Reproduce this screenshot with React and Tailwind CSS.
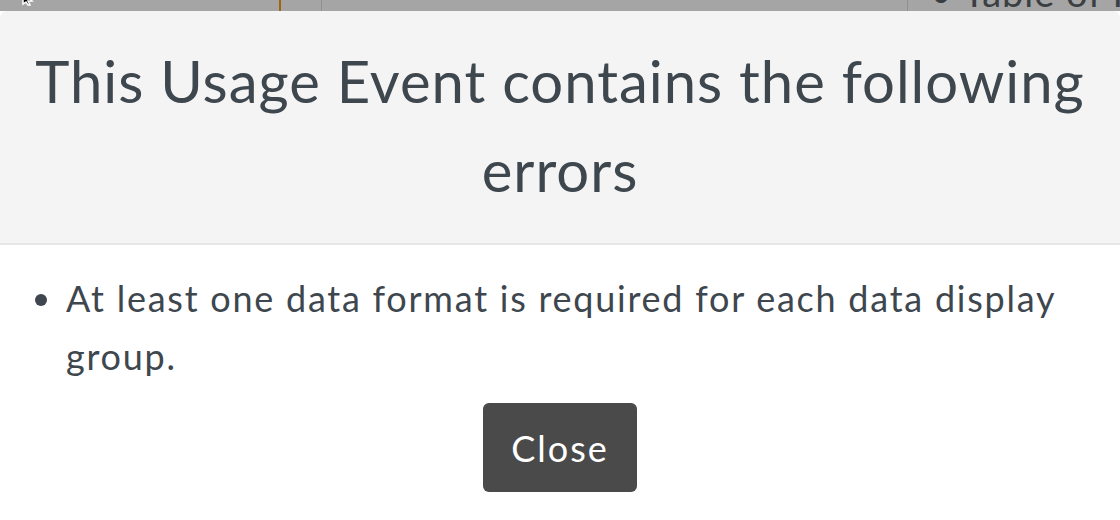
export default function App() {
  const font = { fontFamily: "Lato, 'Open Sans', sans-serif" };
  return (
    <div className="w-[1120px] h-[520px] overflow-hidden bg-white" style={font}>
      <div className="h-[11px] bg-[#a5a5a5] overflow-hidden flex items-end">
        <div className="w-[279px] h-full relative">
          <svg className="absolute left-[20px] top-[-8px]" width="18" height="14" viewBox="0 0 18 14">
            <path d="M3 0 L12 9 L8 9 L10 13 L8 13 L6 10 L3 12 Z" fill="#000" stroke="#fff" strokeWidth="1.5" />
          </svg>
        </div>
        <div className="w-[2px] h-full bg-[#a2630f]" />
        <div className="w-[40px] h-full" />
        <div className="w-[1px] h-full bg-[#8f8f8f]" />
        <div className="w-[585px] h-full" />
        <div className="w-[1px] h-full bg-[#8f8f8f]" />
        <div className="flex-1 h-full relative">
          <div className="absolute left-[22px] bottom-[0px] flex items-baseline gap-[10px] text-[38px] leading-[38px] tracking-[1px] text-[#3a3f44] whitespace-nowrap">
            <span>•</span>
            <span>Table of I</span>
          </div>
        </div>
      </div>
      <div className="bg-[#f4f4f4] rounded-t-[7px] border-b-2 border-[#e6e6e6] h-[234px] pt-[25px] px-[30px]">
        <h1 className="text-center text-[58px] leading-[89px] tracking-[1px] text-[#3e464e] font-normal">
          This Usage Event contains the following errors
        </h1>
      </div>
      <div className="pt-[24px] flex flex-col items-center">
        <ul className="w-full pl-[66px] pr-[40px] list-disc text-[36px] leading-[58px] tracking-[1.75px] text-[#3e464e]">
          <li>At least one data format is required for each data display group.</li>
        </ul>
        <button className="mt-[18px] w-[154px] h-[89px] rounded-[6px] bg-[#4a4a4a] text-white text-[36px] tracking-[2px]">
          Close
        </button>
      </div>
    </div>
  );
}
